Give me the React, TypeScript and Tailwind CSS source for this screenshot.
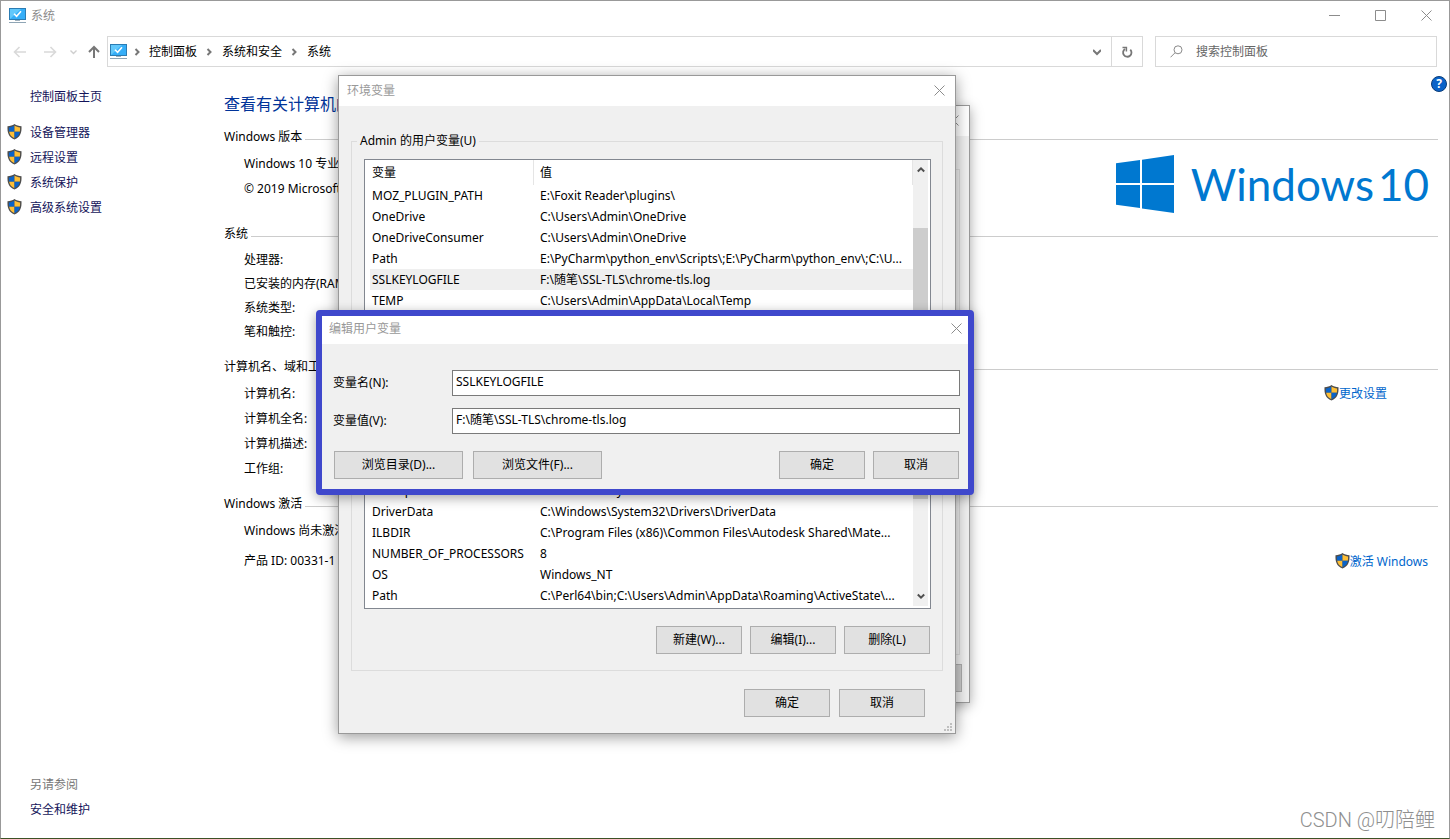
import type { ReactNode } from 'react';

interface Variable {
  name: string;
  value: string;
}

const userVariables: Variable[] = [
  { name: 'MOZ_PLUGIN_PATH', value: 'E:\\Foxit Reader\\plugins\\' },
  { name: 'OneDrive', value: 'C:\\Users\\Admin\\OneDrive' },
  { name: 'OneDriveConsumer', value: 'C:\\Users\\Admin\\OneDrive' },
  { name: 'Path', value: 'E:\\PyCharm\\python_env\\Scripts\\;E:\\PyCharm\\python_env\\;C:\\U...' },
  { name: 'SSLKEYLOGFILE', value: 'F:\\随笔\\SSL-TLS\\chrome-tls.log' },
  { name: 'TEMP', value: 'C:\\Users\\Admin\\AppData\\Local\\Temp' },
];

const systemVariables: Variable[] = [
  { name: 'ComSpec', value: 'C:\\Windows\\system32\\cmd.exe' },
  { name: 'DriverData', value: 'C:\\Windows\\System32\\Drivers\\DriverData' },
  { name: 'ILBDIR', value: 'C:\\Program Files (x86)\\Common Files\\Autodesk Shared\\Mate...' },
  { name: 'NUMBER_OF_PROCESSORS', value: '8' },
  { name: 'OS', value: 'Windows_NT' },
  { name: 'Path', value: 'C:\\Perl64\\bin;C:\\Users\\Admin\\AppData\\Roaming\\ActiveState\\...' },
];

const navLinks = ['设备管理器', '远程设置', '系统保护', '高级系统设置'];

function MonitorIcon() {
  return (
    <svg className="h-4 w-[17px] shrink-0" viewBox="0 0 17 16" aria-hidden="true">
      <rect x="0.5" y="0.5" width="16" height="11" fill="#35aef8" stroke="#2b7cb3" />
      <path d="M1 11V1h11z" fill="#62c8fb" />
      <path d="M5 5.7 7.6 8.3 12 3.3" fill="none" stroke="#fff" strokeWidth="1.6" />
      <path d="M6 12.5h5" stroke="#9fb0bc" />
      <path d="M0 14.5h17" stroke="#8fa5b5" />
    </svg>
  );
}

function ShieldIcon() {
  return (
    <svg className="mb-[2px] h-4 w-[15px] shrink-0" viewBox="0 0 15 16" aria-hidden="true">
      <path d="M7.5 0C5.6 1.4 3.2 2.1.5 2.200c-.3 6.500 1 10.600 7 13.400 6-2.800 7.300-6.900 7-13.400C11.800 2.100 9.400 1.400 7.500 0z" fill="#4d4d4d" />
      <path d="M7.500 1.500C5.900 2.600 4 3.200 1.900 3.400c0 1.600 0 3 .3 4.300h5.300z" fill="#0a63c9" />
      <path d="M7.500 1.500c1.600 1.100 3.500 1.700 5.600 1.900 0 1.600 0 3-.3 4.300H7.500z" fill="#ffbf35" />
      <path d="M2.200 7.700c.6 3.100 2.200 5.100 5.300 6.500V7.700z" fill="#ffbf35" />
      <path d="M12.800 7.700c-.6 3.100-2.200 5.100-5.300 6.500V7.700z" fill="#0a63c9" />
    </svg>
  );
}

function CloseIcon() {
  return (
    <svg className="h-[11px] w-[11px]" viewBox="0 0 11 11" aria-hidden="true">
      <path d="M.5.5l10 10M10.5.5l-10 10" stroke="#8c8c8c" fill="none" />
    </svg>
  );
}

function Chevron({ d, className }: { d: string; className: string }) {
  return (
    <svg className={`h-2 w-2 shrink-0 ${className}`} viewBox="0 0 8 8" aria-hidden="true">
      <path d={d} fill="none" stroke="currentColor" strokeWidth="2" />
    </svg>
  );
}

function SizeGrip() {
  return (
    <svg className="absolute right-[3px] bottom-[2px] h-2 w-2" viewBox="0 0 8 8" aria-hidden="true">
      <path d="M6 0h2v2H6zM6 3h2v2H6zM6 6h2v2H6zM3 3h2v2H3zM3 6h2v2H3zM0 6h2v2H0z" fill="#bfbfbf" />
    </svg>
  );
}

function DialogButton({ children, wide = false }: { children: ReactNode; wide?: boolean }) {
  return (
    <button
      type="button"
      className={`h-7 border border-[#adadad] bg-[#e1e1e1] hover:bg-[#e5f1fb] ${wide ? 'w-[129px]' : 'w-[86px]'}`}
    >
      {children}
    </button>
  );
}

interface VariableListProps {
  rows: Variable[];
  thumb: string;
  selected?: string;
  showHeader?: boolean;
}

function VariableList({ rows, thumb, selected, showHeader = false }: VariableListProps) {
  return (
    <div className="flex border border-[#828790] bg-white pr-[2px] pb-[2px] pl-[5px]">
      <table className="w-full table-fixed self-start border-separate border-spacing-0 text-left">
        <colgroup>
          <col className="w-[164px]" />
          <col />
        </colgroup>
        {showHeader && (
          <thead>
            <tr className="h-[25px]">
              <th className="border-r border-[#e5e5e5] pl-[2px] font-normal">变量</th>
              <th className="border-r border-[#e5e5e5] pl-[6px] font-normal">值</th>
            </tr>
          </thead>
        )}
        <tbody>
          {rows.map((row) => (
            <tr key={row.name} className={`h-[21px] ${row.name === selected ? 'bg-[#efefef]' : ''}`}>
              <td className="whitespace-nowrap pl-[2px]">{row.name}</td>
              <td className="overflow-hidden whitespace-nowrap pl-[6px]">{row.value}</td>
            </tr>
          ))}
        </tbody>
      </table>
      <div className="flex w-[15px] shrink-0 flex-col items-center bg-[#f0f0f0] py-[6px] text-[#505050]">
        <Chevron d="M.8 5.5 4 2.300l3.200 3.200" className="" />
        <div className={`w-full bg-[#cdcdcd] ${thumb}`} />
        <Chevron d="M.8 2.500 4 5.700l3.200-3.200" className="mt-auto" />
      </div>
    </div>
  );
}

function Section({ title, children }: { title: string; children: ReactNode }) {
  return (
    <section>
      <div className="flex items-center gap-[3px]">
        <h2 className="shrink-0">{title}</h2>
        <div className="mt-1 h-px flex-1 bg-[#ccc]" />
      </div>
      <div className="mt-1 flex justify-between pl-5">{children}</div>
    </section>
  );
}

function SystemWindow() {
  return (
    <div className="flex min-h-screen flex-col border border-[#999] border-b-[#3d5226] bg-white">
      <header className="flex h-[30px] items-center pl-2">
        <MonitorIcon />
        <h1 className="ml-[5px] flex-1 text-[#8c8c8c]">系统</h1>
        <div className="flex items-center pb-[2px]">
          <button type="button" aria-label="最小化" className="flex w-[46px] justify-center">
            <svg className="h-[11px] w-[11px]" viewBox="0 0 11 11"><path d="M0 5.500h11" stroke="#8c8c8c" /></svg>
          </button>
          <button type="button" aria-label="最大化" className="flex w-[46px] justify-center">
            <svg className="h-[11px] w-[11px]" viewBox="0 0 11 11"><path d="M.5.5h10v10H.5z" fill="none" stroke="#8c8c8c" /></svg>
          </button>
          <button type="button" aria-label="关闭" className="flex w-[46px] justify-center">
            <CloseIcon />
          </button>
        </div>
      </header>

      {/* Navigation + address bar */}
      <nav className="mt-[5px] flex h-[31px] items-stretch pr-3">
        <div className="flex w-[106px] shrink-0 items-center pl-3">
          <svg className="h-[14px] w-[90px]" viewBox="0 0 90 14" fill="none" aria-hidden="true">
            <path d="M1.500 7H13M6.500 2l-5 5 5 5" stroke="#d9d9d9" strokeWidth="1.6" />
            <path d="M31 7h11.500M37.500 2l5 5-5 5" stroke="#d9d9d9" strokeWidth="1.6" />
            <path d="M57.500 5.500l3 3 3-3" stroke="#cfcfcf" strokeWidth="1.4" />
            <path d="M81 13V2M76 7l5-5 5 5" stroke="#777" strokeWidth="2" />
          </svg>
        </div>
        <div className="flex flex-1 border border-[#d9d9d9]">
          <div className="flex flex-1 items-center pl-[2px]">
            <MonitorIcon />
            <Chevron d="M2.500 1l3 3-3 3" className="ml-[6px] text-[#777]" />
            <a href="#panel" className="ml-2">控制面板</a>
            <Chevron d="M2.500 1l3 3-3 3" className="ml-2 text-[#777]" />
            <a href="#security" className="ml-[9px]">系统和安全</a>
            <Chevron d="M2.500 1l3 3-3 3" className="ml-2 text-[#777]" />
            <a href="#system" className="ml-[9px]">系统</a>
            <Chevron d="M0 2l4 4 4-4" className="mr-[10px] ml-auto text-[#777]" />
          </div>
          <button type="button" aria-label="刷新" className="flex w-[31px] items-center justify-center border-l border-[#d9d9d9]">
            <svg className="h-3 w-3" viewBox="0 0 12 12" fill="none" aria-hidden="true">
              <path d="M9.300 3.600A4.200 4.200 0 1 1 4 3" stroke="#777" strokeWidth="1.8" />
              <path d="M1.500 1.600H5.400V5.500" stroke="#777" strokeWidth="1.5" />
            </svg>
          </button>
        </div>
        <label className="ml-3 flex w-[282px] items-center border border-[#d9d9d9] pl-[14px]">
          <svg className="h-[13px] w-[13px]" viewBox="0 0 13 13" fill="none" aria-hidden="true">
            <circle cx="8" cy="4.8" r="4" stroke="#8a8a8a" />
            <path d="M5 7.800.5 12.300" stroke="#8a8a8a" />
          </svg>
          <input
            type="text"
            aria-label="搜索控制面板"
            placeholder="搜索控制面板"
            className="ml-[13px] w-[200px] outline-none placeholder:text-[#666]"
          />
        </label>
      </nav>

      <div className="flex flex-1">
        <aside className="flex w-[223px] shrink-0 flex-col pt-5 pb-[18px] pl-[6px] text-[#14145a]">
          <a href="#home" className="pl-[23px]">控制面板主页</a>
          <ul className="mt-[13px]">
            {navLinks.map((link) => (
              <li key={link}>
                <a href="#tools" className="flex h-[25px] items-center gap-2">
                  <ShieldIcon />
                  {link}
                </a>
              </li>
            ))}
          </ul>
          <div className="mt-auto pl-[23px]">
            <p className="text-[#777]">另请参阅</p>
            <a href="#maintenance" className="mt-[5px] block">安全和维护</a>
          </div>
        </aside>

        <main className="relative flex flex-1 flex-col gap-[13px] pt-[27px] pr-[11px]">
          <button type="button" aria-label="帮助" className="absolute top-[9px] right-[2px] flex h-4 w-4 items-center justify-center rounded-full border border-[#0a3c78] bg-[#0a63c9] text-[12px] font-bold text-white">
            ?
          </button>
          <p className="text-[16px] text-[#003399]">查看有关计算机的</p>
          <Section title="Windows 版本">
            <div className="leading-[25px]">
              <p>Windows 10 专业版</p>
              <p>© 2019 Microsoft</p>
            </div>
            <div className="mt-1 -mb-[2px] flex items-center gap-[17px] pr-[9px] text-[#0078d0]">
              <svg className="h-[58px] w-[59px]" viewBox="0 0 59 58" fill="currentColor" aria-hidden="true">
                <path d="M1 8.300 25 5v23H1zM27 4.700 59 0v28H27zM1 30h24v23L1 49.700zM27 30h32v28l-32-4.500z" />
              </svg>
              <div className="flex gap-1 font-['Lato'] text-[44px] leading-[58px]">
                <span>Windows</span>
                <span>10</span>
              </div>
            </div>
          </Section>
          <Section title="系统">
            <div className="leading-6">
              <p>处理器:</p>
              <p>已安装的内存(RAM):</p>
              <p>系统类型:</p>
              <p>笔和触控:</p>
            </div>
          </Section>
          <Section title="计算机名、域和工作组设置">
            <div className="leading-[25px]">
              <p>计算机名:</p>
              <p>计算机全名:</p>
              <p>计算机描述:</p>
              <p>工作组:</p>
            </div>
            <a href="#change" className="mr-[51px] flex h-[26px] items-center text-[#0066cc]">
              <ShieldIcon />
              更改设置
            </a>
          </Section>
          <Section title="Windows 激活">
            <div className="leading-[25px]">
              <p>Windows 尚未激活。</p>
              <p className="mt-[5px]">产品 ID: 00331-1</p>
            </div>
            <a href="#activate" className="mt-8 mr-[10px] flex h-6 items-center text-[#0066cc]">
              <ShieldIcon />
              激活 Windows
            </a>
          </Section>
        </main>
      </div>
    </div>
  );
}

// System properties dialog, mostly covered by the variables dialog
function PropertiesDialog() {
  return (
    <div className="absolute top-[105px] left-[560px] flex h-[598px] w-[410px] flex-col border border-[#999] bg-[#f0f0f0] shadow-[0_3px_12px_rgba(0,0,0,0.35)]">
      <div className="flex h-[30px] items-center justify-end bg-white pr-[10px] pb-[2px]">
        <CloseIcon />
      </div>
      <div className="mt-[33px] mr-[9px] flex-1 border border-[#dcdcdc]" />
      <div className="mt-[9px] mr-[7px] mb-[10px] h-7 w-[86px] self-end border border-[#adadad] bg-[#ccc]" />
    </div>
  );
}

function VariablesDialog() {
  return (
    <div role="dialog" aria-label="环境变量" className="absolute top-[75px] left-[338px] w-[618px] border border-[#999] bg-[#f0f0f0] shadow-[0_3px_14px_rgba(0,0,0,0.4)]">
      <div className="flex h-[30px] items-center justify-between bg-white pr-[10px] pl-2 text-[#999]">
        <h2>环境变量</h2>
        <button type="button" aria-label="关闭" className="pb-[2px]"><CloseIcon /></button>
      </div>
      <div className="px-3 pt-[25px] pb-4">
        <fieldset className="border border-[#dcdcdc] pt-2 pr-[11px] pb-[50px] pl-3">
          <legend className="-ml-[7px] px-[3px]">Admin 的用户变量(U)</legend>
          <VariableList rows={userVariables} selected="SSLKEYLOGFILE" showHeader thumb="mt-[54px] h-[109px]" />
        </fieldset>
        <fieldset className="mt-3 border border-[#dcdcdc] pt-[61px] pr-[11px] pb-4 pl-3">
          <VariableList rows={systemVariables} thumb="h-[5px]" />
          <div className="mt-[17px] flex justify-end gap-2 pr-px">
            <DialogButton>新建(W)...</DialogButton>
            <DialogButton>编辑(I)...</DialogButton>
            <DialogButton>删除(L)</DialogButton>
          </div>
        </fieldset>
        <div className="mt-[18px] mr-[18px] flex justify-end gap-[9px]">
          <DialogButton>确定</DialogButton>
          <DialogButton>取消</DialogButton>
        </div>
      </div>
      <SizeGrip />
    </div>
  );
}

function EditDialog() {
  return (
    <div role="dialog" aria-label="编辑用户变量" className="absolute top-[310px] left-[316px] w-[658px] rounded-[4px] border-[6px] border-[#3f48cc] bg-[#f0f0f0] shadow-[0_3px_12px_rgba(0,0,0,0.35)]">
      <div className="flex h-7 items-center justify-between bg-white pr-[6px] pb-[2px] pl-[7px] text-[#999]">
        <h2>编辑用户变量</h2>
        <button type="button" aria-label="关闭" className="pb-[2px]"><CloseIcon /></button>
      </div>
      <form className="pt-[26px] pr-2 pb-[10px] pl-[11px]">
        <div className="flex h-[26px] items-center">
          <label htmlFor="var-name" className="w-[119px]">变量名(N):</label>
          <input id="var-name" type="text" defaultValue="SSLKEYLOGFILE" className="h-full flex-1 border border-[#7a7a7a] bg-white px-[3px] pb-1 outline-none" />
        </div>
        <div className="mt-3 flex h-[26px] items-center">
          <label htmlFor="var-value" className="w-[119px]">变量值(V):</label>
          <input id="var-value" type="text" defaultValue="F:\随笔\SSL-TLS\chrome-tls.log" className="h-full flex-1 border border-[#7a7a7a] bg-white px-[3px] pb-1 outline-none" />
        </div>
        <div className="mt-[17px] flex gap-[10px] px-px">
          <DialogButton wide>浏览目录(D)...</DialogButton>
          <DialogButton wide>浏览文件(F)...</DialogButton>
          <div className="ml-auto flex gap-2">
            <DialogButton>确定</DialogButton>
            <DialogButton>取消</DialogButton>
          </div>
        </div>
      </form>
    </div>
  );
}

export default function App() {
  return (
    <div className="relative min-h-screen font-['Noto_Sans','Noto_Sans_CJK_SC',sans-serif] text-[12px] leading-5 text-black">
      <SystemWindow />
      <PropertiesDialog />
      <VariablesDialog />
      <EditDialog />
      <div className="absolute right-[15px] bottom-[5px] font-['Roboto','Noto_Sans_CJK_SC',sans-serif] text-[20px] leading-7 font-light text-[#8f8f8f]">CSDN @叨陪鲤</div>
    </div>
  );
}
